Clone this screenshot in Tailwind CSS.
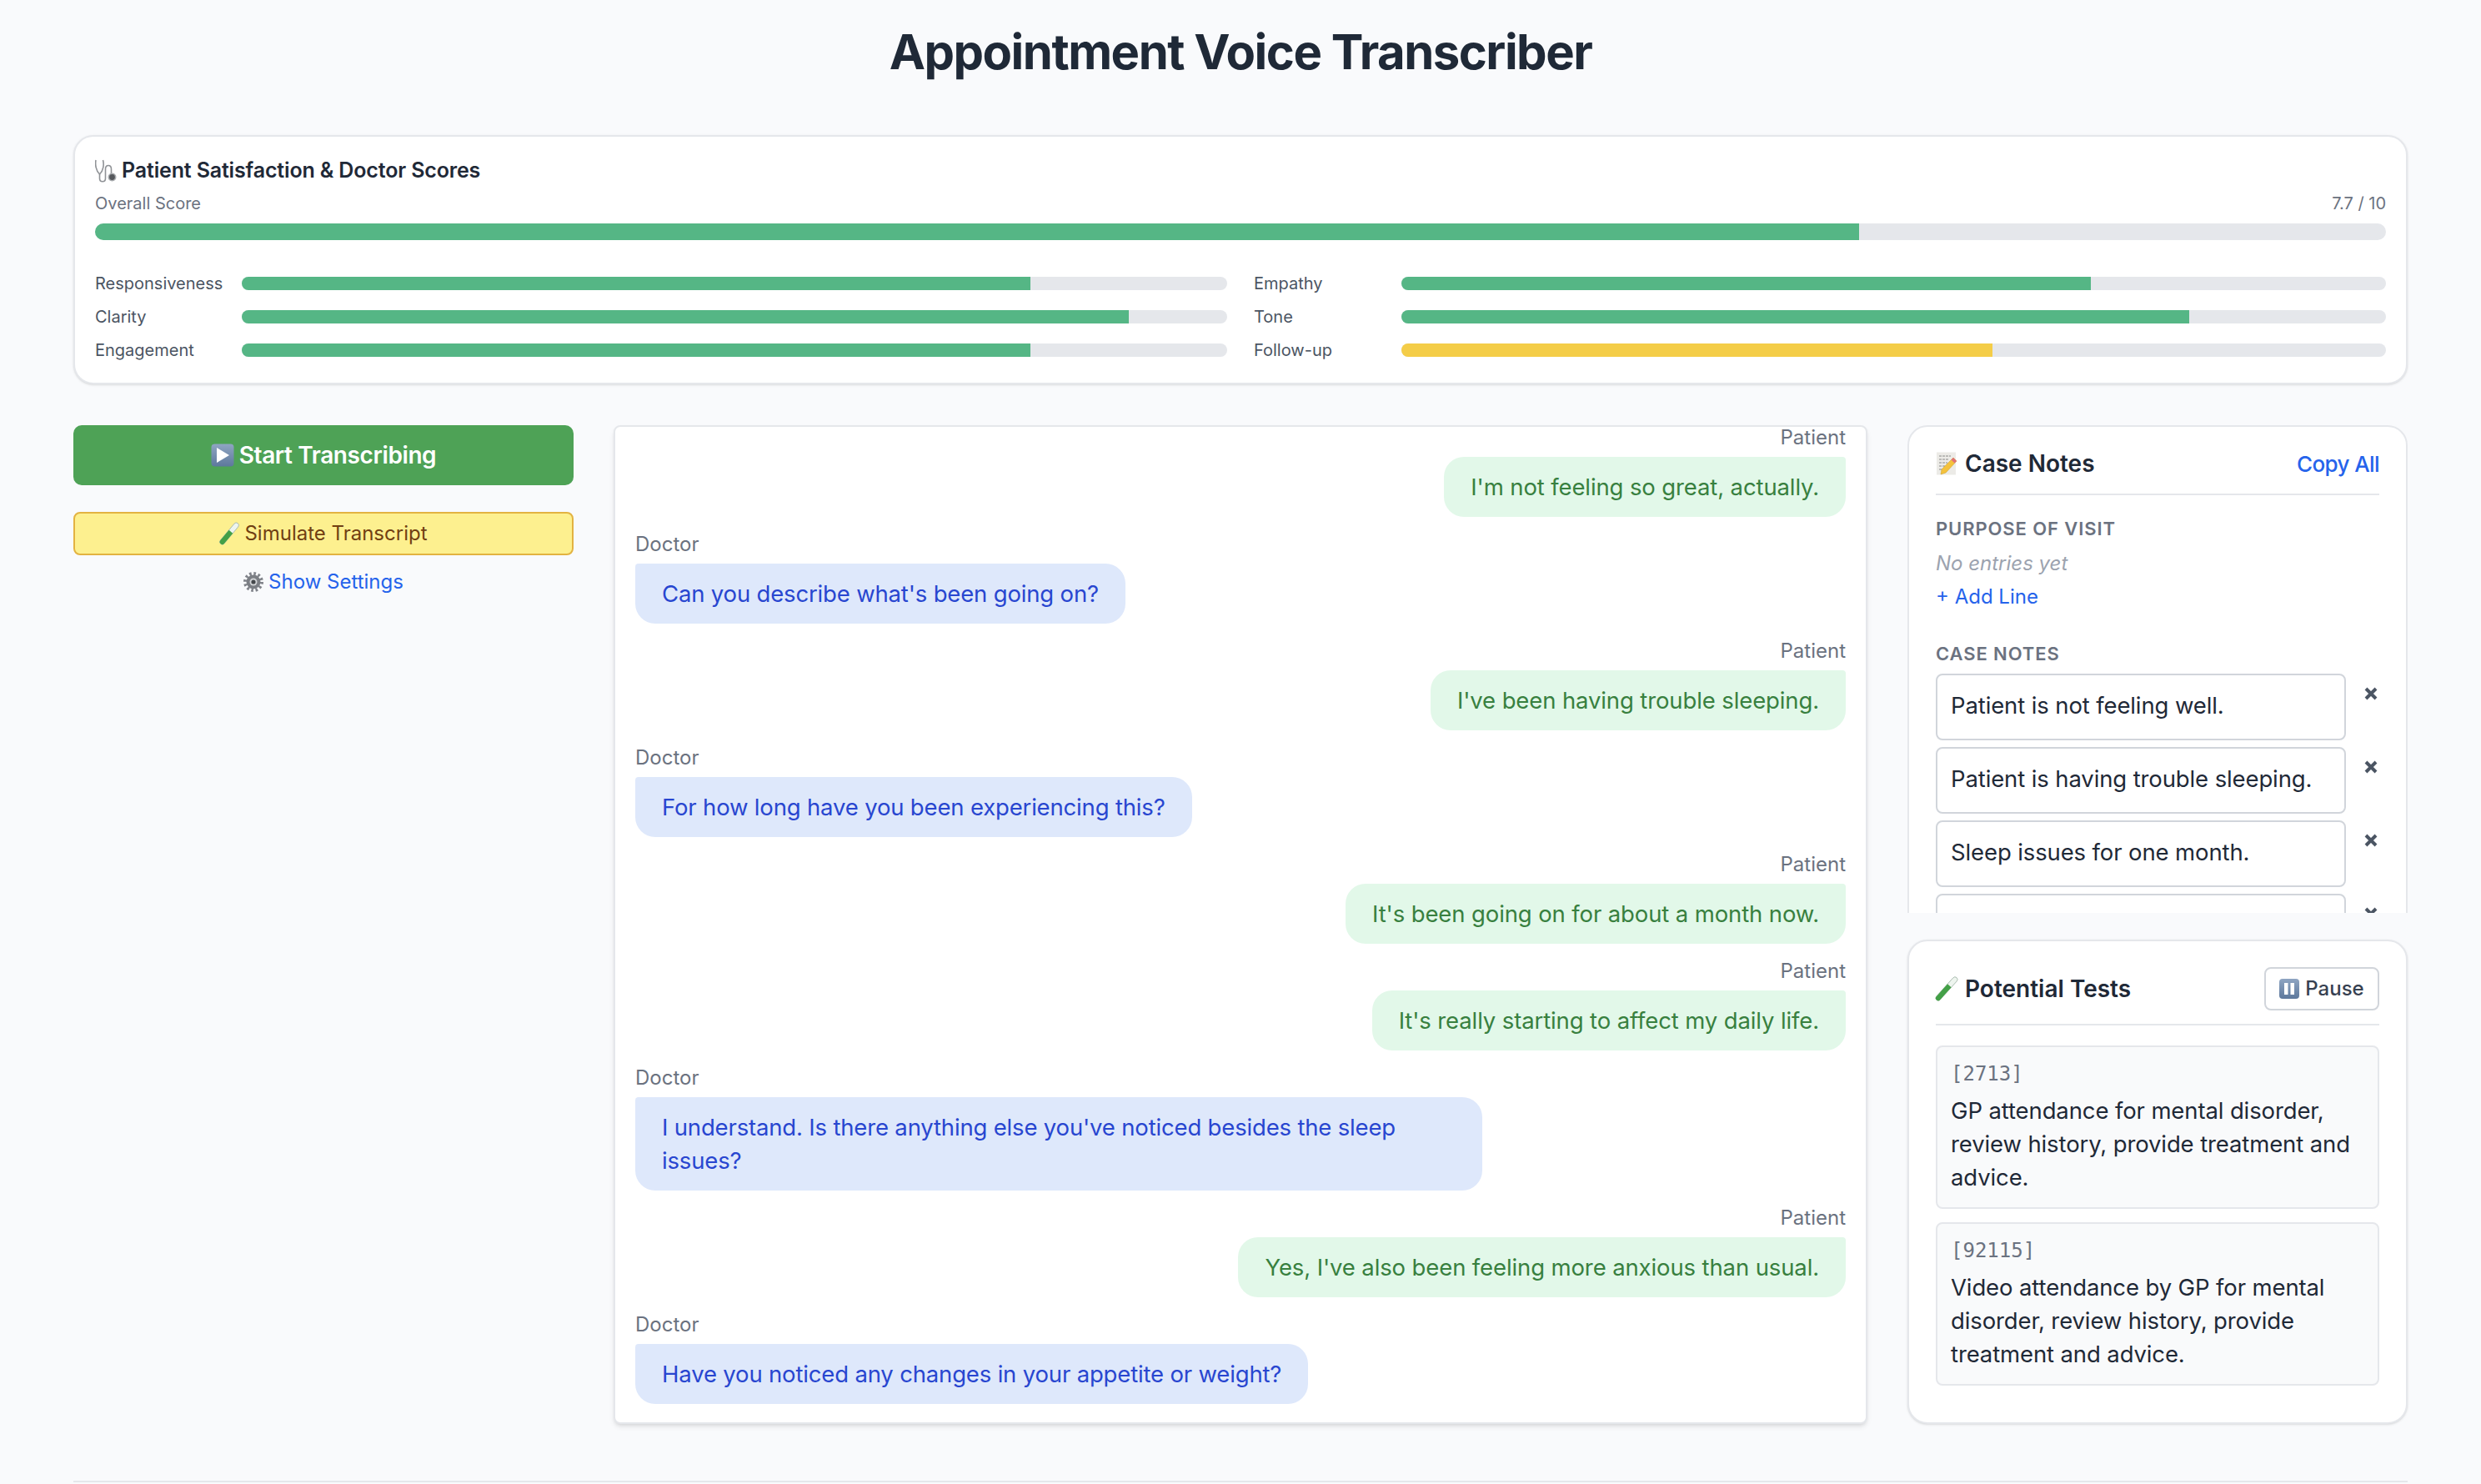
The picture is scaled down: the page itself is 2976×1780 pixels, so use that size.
<!DOCTYPE html>
<html lang="en">
<head>
    <meta charset="UTF-8">
    <title>Appointment Voice Transcriber</title>
    <script src="https://cdn.jsdelivr.net/npm/@tailwindcss/browser@4"></script>
</head>
<body class="bg-[#f9fafc] h-[1780px] overflow-hidden px-[88px] font-['Inter','Liberation_Sans',sans-serif] text-[#1f2937]">
    <h1 class="pt-[26px] text-center text-[58px] leading-[72px] font-bold tracking-[-1.5px]">Appointment Voice Transcriber</h1>

    <!-- Scores -->
    <section class="mt-[64px] h-[299px] rounded-[24px] border-2 border-[#e5e7eb] bg-white px-[24px] pt-[25px] shadow-sm">
        <h2 class="flex h-[32px] items-center gap-[6px] text-[25px] font-semibold tracking-[-0.15px]">
            <svg class="h-[28px] w-[26px]" viewBox="0 0 26 28" fill="none" stroke="#8f9296" stroke-width="1.6"><path d="M1 1C0 6 1 14 5.5 18C10 14 11 6 9.5 1"/><path d="M5.5 18V23C5.5 28 12.5 28 12.5 23V12C12.5 6 19.5 6 19.5 12V17"/><circle cx="20.5" cy="21.5" r="4.2" fill="#55585c" stroke="#a9acaf"/></svg>
            Patient Satisfaction &amp; Doctor Scores
        </h2>
        <div class="mt-[7px] flex h-[32px] items-center justify-between text-[20px] text-[#6b7280]"><span>Overall Score</span><span>7.7 / 10</span></div>
        <div class="mt-[8px] h-[20px] overflow-hidden rounded-full bg-[#e5e7eb]"><div class="h-full bg-[#55b685]" style="width:77%"></div></div>
        <div class="mt-[40px] grid grid-cols-2 gap-x-[32px] gap-y-[16px] text-[20px] text-[#4b5563]">
            <div class="flex h-[24px] items-center"><span class="w-[176px]">Responsiveness</span><div class="h-[16px] flex-1 overflow-hidden rounded-full bg-[#e5e7eb]"><div class="h-full bg-[#55b685]" style="width:80%"></div></div></div>
            <div class="flex h-[24px] items-center"><span class="w-[177px]">Empathy</span><div class="h-[16px] flex-1 overflow-hidden rounded-full bg-[#e5e7eb]"><div class="h-full bg-[#55b685]" style="width:70%"></div></div></div>
            <div class="flex h-[24px] items-center"><span class="w-[176px]">Clarity</span><div class="h-[16px] flex-1 overflow-hidden rounded-full bg-[#e5e7eb]"><div class="h-full bg-[#55b685]" style="width:90%"></div></div></div>
            <div class="flex h-[24px] items-center"><span class="w-[177px]">Tone</span><div class="h-[16px] flex-1 overflow-hidden rounded-full bg-[#e5e7eb]"><div class="h-full bg-[#55b685]" style="width:80%"></div></div></div>
            <div class="flex h-[24px] items-center"><span class="w-[176px]">Engagement</span><div class="h-[16px] flex-1 overflow-hidden rounded-full bg-[#e5e7eb]"><div class="h-full bg-[#55b685]" style="width:80%"></div></div></div>
            <div class="flex h-[24px] items-center"><span class="w-[177px]">Follow-up</span><div class="h-[16px] flex-1 overflow-hidden rounded-full bg-[#e5e7eb]"><div class="h-full bg-[#f4cd48]" style="width:60%"></div></div></div>
        </div>
    </section>

    <main class="mt-[49px] flex h-[1198px] gap-[48px]">
        <!-- Controls -->
        <div class="w-[600px] shrink-0">
            <button class="flex h-[72px] w-full items-center justify-center gap-[6px] rounded-[10px] bg-[#4ea256] text-[28px] font-semibold tracking-[-0.4px] text-white">
                <svg class="h-[28px] w-[28px]" viewBox="0 0 28 28"><defs><linearGradient id="btnBlue" x1="0" y1="0" x2="0" y2="1"><stop offset="0" stop-color="#8fa5c2"/><stop offset="1" stop-color="#5d789c"/></linearGradient></defs><rect x="0.5" y="0.5" width="27" height="27" rx="4" fill="url(#btnBlue)"/><path d="M7 5l15 9-15 9z" fill="#fff"/></svg>
                Start Transcribing
            </button>
            <button class="mt-[32px] flex h-[52px] w-full items-center justify-center gap-[6px] rounded-[8px] border-2 border-[#e3b341] bg-[#fdf08f] text-[24px] text-[#713f12]">
                <svg class="h-[26px] w-[24px] overflow-visible" viewBox="0 0 24 26"><g transform="rotate(40 12 13)"><rect x="9" y="-3" width="6" height="32" rx="3" fill="#eef5ef" stroke="#9fb3a5" stroke-width="0.8"/><path d="M9 10h6v16a3 3 0 0 1-6 0z" fill="#43a047"/></g></svg>
                Simulate Transcript
            </button>
            <div class="mt-[16px] flex h-[32px] items-center justify-center gap-[6px] text-[24px] text-[#2563eb]">
                <svg class="h-[24px] w-[24px]" viewBox="0 0 24 24"><circle cx="12" cy="12" r="10" fill="none" stroke="#80838a" stroke-width="4" stroke-dasharray="2.6 2.64"/><circle cx="12" cy="12" r="8.5" fill="#7b7e84"/><circle cx="12" cy="12" r="4.5" fill="#d2d4d7"/><circle cx="12" cy="12" r="2.6" fill="#44474b"/></svg>
                Show Settings
            </div>
        </div>

        <!-- Transcript -->
        <div class="flex h-full w-[1504px] shrink-0 flex-col justify-end overflow-hidden rounded-[8px] border-2 border-[#e5e7eb] bg-white px-[24px] pb-[22px] shadow-md">
            <div class="flex shrink-0 flex-col items-end">
                <div class="h-[32px] text-[24px] leading-[33px] text-[#6b7280]">Patient</div>
                <div class="mt-[8px] max-w-[70%] rounded-[24px] rounded-tr-[4px] bg-[#e2f8e9] px-[32px] py-[16px] text-[27.5px] leading-[40px] tracking-[-0.12px] text-[#38803f]">I'm not feeling so great, actually.</div>
            </div>
            <div class="mt-[16px] flex shrink-0 flex-col items-start">
                <div class="h-[32px] text-[24px] leading-[33px] text-[#6b7280]">Doctor</div>
                <div class="mt-[8px] max-w-[70%] rounded-[24px] rounded-tl-[4px] bg-[#dee8fb] px-[32px] py-[16px] text-[27.5px] leading-[40px] tracking-[-0.17px] text-[#2846d0]">Can you describe what's been going on?</div>
            </div>
            <div class="mt-[16px] flex shrink-0 flex-col items-end">
                <div class="h-[32px] text-[24px] leading-[33px] text-[#6b7280]">Patient</div>
                <div class="mt-[8px] max-w-[70%] rounded-[24px] rounded-tr-[4px] bg-[#e2f8e9] px-[32px] py-[16px] text-[27.5px] leading-[40px] tracking-[-0.12px] text-[#38803f]">I've been having trouble sleeping.</div>
            </div>
            <div class="mt-[16px] flex shrink-0 flex-col items-start">
                <div class="h-[32px] text-[24px] leading-[33px] text-[#6b7280]">Doctor</div>
                <div class="mt-[8px] max-w-[70%] rounded-[24px] rounded-tl-[4px] bg-[#dee8fb] px-[32px] py-[16px] text-[27.5px] leading-[40px] tracking-[-0.17px] text-[#2846d0]">For how long have you been experiencing this?</div>
            </div>
            <div class="mt-[16px] flex shrink-0 flex-col items-end">
                <div class="h-[32px] text-[24px] leading-[33px] text-[#6b7280]">Patient</div>
                <div class="mt-[8px] max-w-[70%] rounded-[24px] rounded-tr-[4px] bg-[#e2f8e9] px-[32px] py-[16px] text-[27.5px] leading-[40px] tracking-[-0.12px] text-[#38803f]">It's been going on for about a month now.</div>
            </div>
            <div class="mt-[16px] flex shrink-0 flex-col items-end">
                <div class="h-[32px] text-[24px] leading-[33px] text-[#6b7280]">Patient</div>
                <div class="mt-[8px] max-w-[70%] rounded-[24px] rounded-tr-[4px] bg-[#e2f8e9] px-[32px] py-[16px] text-[27.5px] leading-[40px] tracking-[-0.12px] text-[#38803f]">It's really starting to affect my daily life.</div>
            </div>
            <div class="mt-[16px] flex shrink-0 flex-col items-start">
                <div class="h-[32px] text-[24px] leading-[33px] text-[#6b7280]">Doctor</div>
                <div class="mt-[8px] max-w-[70%] rounded-[24px] rounded-tl-[4px] bg-[#dee8fb] px-[32px] py-[16px] text-[27.5px] leading-[40px] tracking-[-0.17px] text-[#2846d0]">I understand. Is there anything else you've noticed besides the sleep issues?</div>
            </div>
            <div class="mt-[16px] flex shrink-0 flex-col items-end">
                <div class="h-[32px] text-[24px] leading-[33px] text-[#6b7280]">Patient</div>
                <div class="mt-[8px] max-w-[70%] rounded-[24px] rounded-tr-[4px] bg-[#e2f8e9] px-[32px] py-[16px] text-[27.5px] leading-[40px] tracking-[-0.12px] text-[#38803f]">Yes, I've also been feeling more anxious than usual.</div>
            </div>
            <div class="mt-[16px] flex shrink-0 flex-col items-start">
                <div class="h-[32px] text-[24px] leading-[33px] text-[#6b7280]">Doctor</div>
                <div class="mt-[8px] max-w-[70%] rounded-[24px] rounded-tl-[4px] bg-[#dee8fb] px-[32px] py-[16px] text-[27.5px] leading-[40px] tracking-[-0.17px] text-[#2846d0]">Have you noticed any changes in your appetite or weight?</div>
            </div>
        </div>

        <!-- Side column -->
        <div class="flex w-[600px] shrink-0 flex-col gap-[32px]">
            <div class="h-[585px] shrink-0 overflow-hidden">
                <div class="h-[700px] rounded-[24px] border-2 border-[#e5e7eb] bg-white px-[32px] pt-[16px]">
                    <div class="flex h-[66px] items-center justify-between border-b-2 border-[#e5e7eb] pb-[8px]">
                        <h3 class="flex items-center gap-[9px] text-[28px] font-semibold">
                            <svg class="h-[28px] w-[26px]" viewBox="0 0 26 28"><rect x="1" y="0.5" width="23" height="27" fill="#ecebe7"/><path d="M4 5h14M4 9h12M4 13h10M4 17h7M4 21h4" stroke="#8a8a88" stroke-width="1" stroke-dasharray="3 1"/><path d="M21 7l4 4-13 14-6 2 1-6z" fill="#f4c23c" stroke="#c99a24" stroke-width="0.5"/><path d="M21 7l4 4-2.5 2.5-4-4z" fill="#e0707a"/></svg>
                            Case Notes
                        </h3>
                        <span class="text-[26px] font-medium tracking-[-0.6px] text-[#2563eb]">Copy All</span>
                    </div>
                    <div class="mt-[24px] text-[22px] leading-[32px] font-semibold tracking-[0.9px] text-[#6b7280]">PURPOSE OF VISIT</div>
                    <div class="mt-[10px] text-[24px] leading-[32px] text-[#9ca3af] italic">No entries yet</div>
                    <div class="mt-[8px] text-[24px] leading-[32px] text-[#2563eb]">+ Add Line</div>
                    <div class="mt-[36px] text-[22px] leading-[32px] font-semibold tracking-[0.9px] text-[#6b7280]">CASE NOTES</div>
                    <div class="mt-[8px] flex flex-col gap-[8px] text-[27.5px] leading-[40px] tracking-[-0.12px]">
                        <div class="flex">
                            <div class="h-[80px] w-[492px] rounded-[8px] border-2 border-[#d1d5db] px-[16px] pt-[16px]">Patient is not feeling well.</div>
                            <svg class="mt-[16px] ml-[22px] h-[16px] w-[16px]" viewBox="0 0 16 16"><path d="M2 2l12 12M14 2L2 14" stroke="#4b5563" stroke-width="4"/></svg>
                        </div>
                        <div class="flex">
                            <div class="h-[80px] w-[492px] rounded-[8px] border-2 border-[#d1d5db] px-[16px] pt-[16px]">Patient is having trouble sleeping.</div>
                            <svg class="mt-[16px] ml-[22px] h-[16px] w-[16px]" viewBox="0 0 16 16"><path d="M2 2l12 12M14 2L2 14" stroke="#4b5563" stroke-width="4"/></svg>
                        </div>
                        <div class="flex">
                            <div class="h-[80px] w-[492px] rounded-[8px] border-2 border-[#d1d5db] px-[16px] pt-[16px]">Sleep issues for one month.</div>
                            <svg class="mt-[16px] ml-[22px] h-[16px] w-[16px]" viewBox="0 0 16 16"><path d="M2 2l12 12M14 2L2 14" stroke="#4b5563" stroke-width="4"/></svg>
                        </div>
                        <div class="flex">
                            <div class="h-[80px] w-[492px] rounded-[8px] border-2 border-[#d1d5db] px-[16px] pt-[16px]"></div>
                            <svg class="mt-[16px] ml-[22px] h-[16px] w-[16px]" viewBox="0 0 16 16"><path d="M2 2l12 12M14 2L2 14" stroke="#4b5563" stroke-width="4"/></svg>
                        </div>
                    </div>
                </div>
            </div>
            <div class="h-[581px] shrink-0 rounded-[24px] border-2 border-[#e5e7eb] bg-white px-[32px] pt-[31px] shadow-sm">
                <div class="flex h-[70px] items-start justify-between border-b-2 border-[#e5e7eb]">
                    <h3 class="flex h-[52px] items-center gap-[9px] text-[28px] font-semibold">
                        <svg class="h-[28px] w-[26px] overflow-visible" viewBox="0 0 26 28"><g transform="rotate(42 13 14)"><rect x="10" y="-4" width="6" height="36" rx="3" fill="#eef5ef" stroke="#9fb3a5" stroke-width="0.8"/><path d="M10 9h6v20a3 3 0 0 1-6 0z" fill="#43a047"/></g></svg>
                        Potential Tests
                    </h3>
                    <div class="flex h-[52px] w-[138px] items-center justify-center gap-[7px] rounded-[8px] border-2 border-[#d1d5db] text-[24px] font-medium text-[#374151]">
                        <svg class="h-[24px] w-[24px]" viewBox="0 0 24 24"><defs><linearGradient id="pauseBlue" x1="0" y1="0" x2="0" y2="1"><stop offset="0" stop-color="#8fa5c2"/><stop offset="1" stop-color="#5d789c"/></linearGradient></defs><rect width="24" height="24" rx="4" fill="url(#pauseBlue)"/><path d="M6 5h4.5v14H6zM13.5 5H18v14h-4.5z" fill="#fff"/></svg>
                        Pause
                    </div>
                </div>
                <div class="mt-[24px] h-[196px] rounded-[8px] border-2 border-[#e5e7eb] bg-[#f9fafb] px-[16px] pt-[16px] text-[27.5px] leading-[40px] tracking-[-0.12px]">
                    <div class="h-[32px] font-['DejaVu_Sans_Mono',monospace] text-[24px] leading-[32px] tracking-normal text-[#6b7280]">[2713]</div>
                    <p class="mt-[8px]">GP attendance for mental disorder, review history, provide treatment and advice.</p>
                </div>
                <div class="mt-[16px] h-[196px] rounded-[8px] border-2 border-[#e5e7eb] bg-[#f9fafb] px-[16px] pt-[16px] text-[27.5px] leading-[40px] tracking-[-0.12px]">
                    <div class="h-[32px] font-['DejaVu_Sans_Mono',monospace] text-[24px] leading-[32px] tracking-normal text-[#6b7280]">[92115]</div>
                    <p class="mt-[8px]">Video attendance by GP for mental disorder, review history, provide treatment and advice.</p>
                </div>
            </div>
        </div>
    </main>

    <footer class="mt-[68px] border-t-2 border-[#e5e7eb]"></footer>
</body>
</html>
